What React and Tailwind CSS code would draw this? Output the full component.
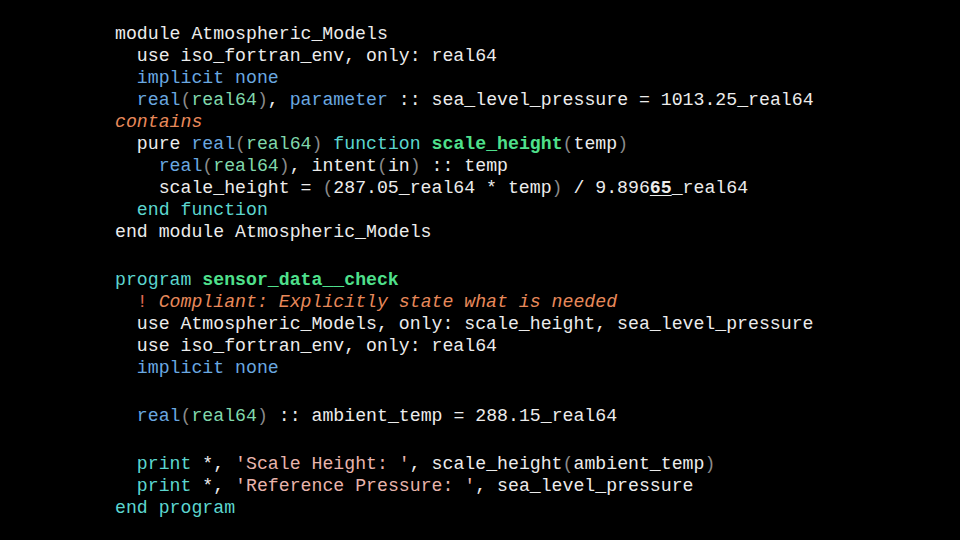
import React from "react";

const B = "text-[#6aa8e0]";
const G = "text-[#80d8ac]";
const T = "text-[#5cd6cf]";
const O = "text-[#e8895a] italic";
const GB = "text-[#4fe08c] font-bold";
const P = "text-[#8a8a8a]";
const S = "text-[#e8b4ac]";
const R = "text-[#e06a52]";

const L = ({ children }) => (
  <div className="h-[22px] leading-[22px] whitespace-pre">{children}</div>
);
const Blank = () => <div className="h-[26px]" />;
const s = (c, t) => <span className={c}>{t}</span>;

export default function App() {
  return (
    <div
      className="w-[960px] h-[540px] bg-black overflow-hidden pl-[115px] pt-[23px] text-[18.2px] text-[#ececec]"
      style={{ fontFamily: '"Liberation Mono", "Courier New", monospace' }}
    >
      <L>module Atmospheric_Models</L>
      <L>  use iso_fortran_env, only: real64</L>
      <L>  {s(B, "implicit none")}</L>
      <L>
        {"  "}
        {s(B, "real")}
        {s(P, "(")}
        {s(G, "real64")}
        {s(P, ")")}, {s(B, "parameter")} :: sea_level_pressure = 1013.25_real64
      </L>
      <L>{s(O, "contains")}</L>
      <L>
        {"  pure "}
        {s(B, "real")}
        {s(P, "(")}
        {s(G, "real64")}
        {s(P, ")")} {s(T, "function")} {s(GB, "scale_height")}
        {s(P, "(")}temp{s(P, ")")}
      </L>
      <L>
        {"    "}
        {s(B, "real")}
        {s(P, "(")}
        {s(G, "real64")}
        {s(P, ")")}, intent{s(P, "(")}in{s(P, ")")} :: temp
      </L>
      <L>
        {"    scale_height = "}
        {s(P, "(")}287.05_real64 * temp{s(P, ")")} / 9.896
        <span className="font-bold underline underline-offset-2">65</span>_real64
      </L>
      <L>  {s(T, "end function")}</L>
      <L>end module Atmospheric_Models</L>
      <Blank />
      <L>
        {s(T, "program")} {s(GB, "sensor_data__check")}
      </L>
      <L>
        {"  "}
        {s(R, "!")} {s(O, "Compliant: Explicitly state what is needed")}
      </L>
      <L>  use Atmospheric_Models, only: scale_height, sea_level_pressure</L>
      <L>  use iso_fortran_env, only: real64</L>
      <L>  {s(B, "implicit none")}</L>
      <Blank />
      <L>
        {"  "}
        {s(B, "real")}
        {s(P, "(")}
        {s(G, "real64")}
        {s(P, ")")} :: ambient_temp = 288.15_real64
      </L>
      <Blank />
      <L>
        {"  "}
        {s(T, "print")} *, {s(S, "'Scale Height: '")}, scale_height
        {s(P, "(")}ambient_temp{s(P, ")")}
      </L>
      <L>
        {"  "}
        {s(T, "print")} *, {s(S, "'Reference Pressure: '")}, sea_level_pressure
      </L>
      <L>{s(T, "end program")}</L>
    </div>
  );
}
